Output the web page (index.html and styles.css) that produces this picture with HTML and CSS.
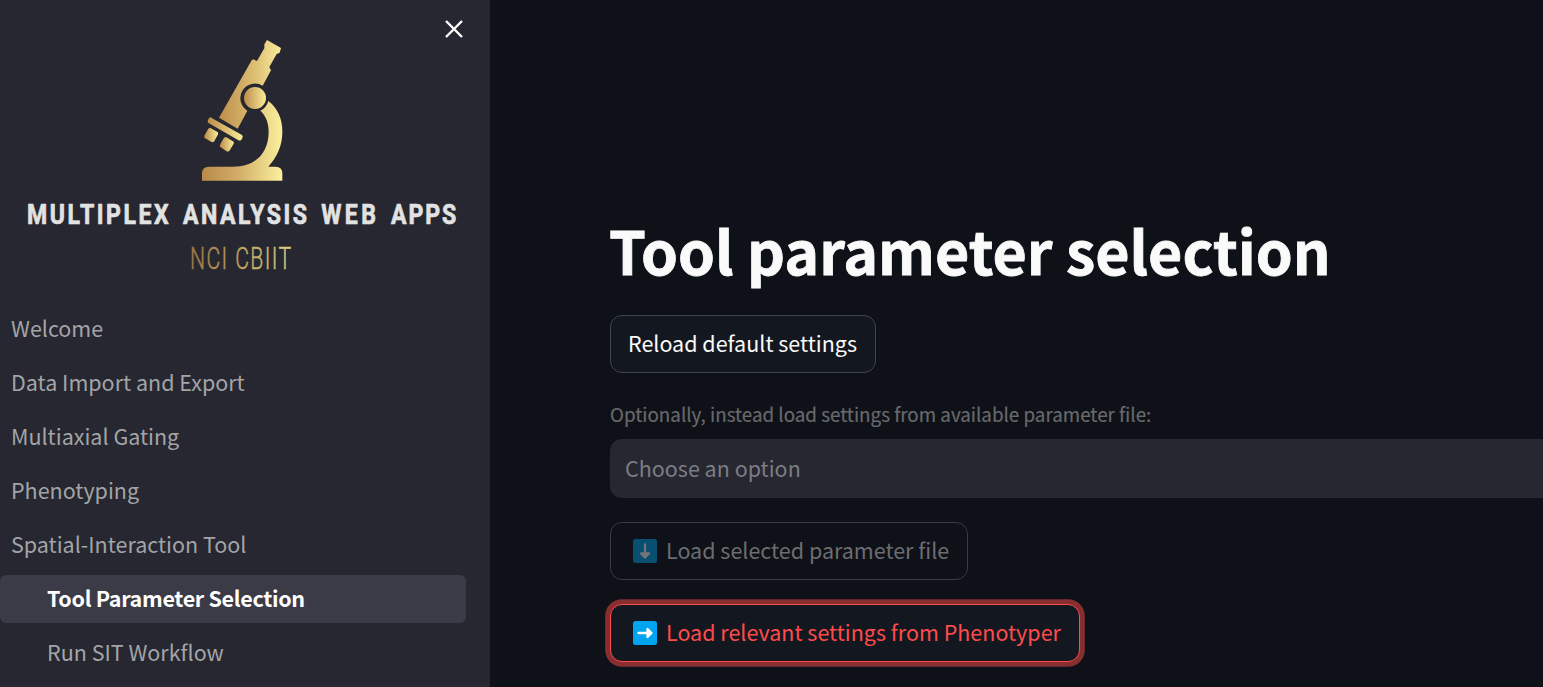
FILE: index.html
```
<!DOCTYPE html>
<html lang="en">
<head>
<meta charset="utf-8">
<title>Multiplex Analysis Web Apps</title>
<link rel="stylesheet" href="styles.css">
</head>
<body>
<div class="app">
  <aside class="sidebar">
    <button class="close" aria-label="Close sidebar"><svg width="20" height="20" viewBox="0 0 20 20"><path d="M2 2L18 18M18 2L2 18"/></svg></button>
    <header class="brand">
      <svg class="microscope" width="110" height="160" viewBox="0 0 330 480">
        <defs>
          <linearGradient id="gold" gradientUnits="userSpaceOnUse" x1="36" y1="0" x2="277" y2="0"><stop offset="0" stop-color="#b98a49"/><stop offset=".45" stop-color="#d2ae67"/><stop offset="1" stop-color="#fbf09d"/></linearGradient>
          <linearGradient id="tube" gradientUnits="userSpaceOnUse" x1="87" y1="0" x2="273" y2="0"><stop offset="0" stop-color="#be8f4c"/><stop offset=".5" stop-color="#d8b76e"/><stop offset="1" stop-color="#f9eb98"/></linearGradient>
          <linearGradient id="part"><stop offset="0" stop-color="#bd8c49"/><stop offset="1" stop-color="#f9ec98"/></linearGradient>
        </defs>
        <path fill="url(#tube)" d="M231 30L273 54L269 68L260 72L238 111L243 121L218 167A43 43 0 0 0 172 242L143 296L87 263L185 91L190 88L201 93L223 55L223 43Z"/>
        <circle fill="url(#part)" cx="195" cy="204" r="33"/>
        <path fill="url(#gold)" d="M235 213C264 234 278 270 277 309C276 350 260 382 235 410H257Q277 410 277 431V452H36V431Q36 410 57 410H130C192 410 235 374 236 306C236 280 228 257 211 242Q229 234 235 213Z"/>
        <path fill="url(#part)" d="M61 262L156 315Q160 318 157 325L153 331Q149 333 144 330L54 278Q52 275 54 271L57 264Z"/>
        <path fill="url(#part)" d="M60 293L84 307V313L72 335L66 337L43 323V317L55 296Z"/>
        <path fill="url(#part)" d="M108 321L131 335V341L118 363L112 365L90 350V344L102 323Z"/>
      </svg>
      <svg class="wordmark" width="470" height="90" viewBox="0 0 470 90">
        <text class="name" x="17" y="33.500" textLength="431" lengthAdjust="spacingAndGlyphs">MULTIPLEX ANALYSIS <tspan class="wide">WEB</tspan> <tspan class="tight">APPS</tspan></text>
        <defs><linearGradient id="org" gradientUnits="userSpaceOnUse" x1="180" y1="0" x2="282" y2="0"><stop offset="0" stop-color="#a27742"/><stop offset="1" stop-color="#ddcf82"/></linearGradient></defs>
        <text class="org" fill="url(#org)" stroke="url(#org)" x="180" y="79" textLength="102.500" lengthAdjust="spacingAndGlyphs">NCI CBIIT</text>
      </svg>
    </header>
    <nav class="nav">
      <a class="item"><span>Welcome</span></a>
      <a class="item"><span>Data Import and Export</span></a>
      <a class="item"><span>Multiaxial Gating</span></a>
      <a class="item"><span>Phenotyping</span></a>
      <a class="item"><span>Spatial-Interaction Tool</span></a>
      <a class="item sub active"><span>Tool Parameter Selection</span></a>
      <a class="item sub"><span>Run SIT Workflow</span></a>
    </nav>
  </aside>
  <main class="main">
    <h1>Tool parameter selection</h1>
    <button class="btn reload">Reload default settings</button>
    <label class="label">Optionally, instead load settings from available parameter file:</label>
    <div class="select">Choose an option</div>
    <button class="btn load disabled"><svg class="emoji" width="24" height="24" viewBox="0 0 24 24"><rect width="24" height="24" rx="2.5" fill="#00a4ef"/><path d="M12 5.500V15M8 14.500H16L12 18.500Z"/></svg>Load selected parameter file</button>
    <button class="btn load focused"><svg class="emoji" width="24" height="24" viewBox="0 0 24 24"><rect width="24" height="24" rx="2.5" fill="#00a4ef"/><path d="M5.500 12H15M14.500 8V16L18.500 12Z"/></svg>Load relevant settings from Phenotyper</button>
  </main>
</div>
</body>
</html>
```
FILE: styles.css
```
* { box-sizing: border-box; }
body { margin: 0; background: #0e1117; font-family: "Noto Sans CJK SC", "Noto Sans", sans-serif; overflow: hidden; }
.app { display: flex; width: 1543px; height: 687px; overflow: hidden; }
.sidebar { position: relative; flex: 0 0 490px; background: #262730; padding-top: 30px; }
.close { position: absolute; top: 19px; right: 26px; width: 20px; height: 20px; padding: 0; border: 0; background: none; }
.close svg { display: block; }
.close path { fill: none; stroke: #fff; stroke-width: 2.4; }
.brand { display: flex; flex-direction: column; height: 275px; }
.microscope { display: block; flex: none; margin-left: 190px; }
.wordmark { display: block; flex: none; margin-left: 10px; overflow: visible; }
.name { font: bold 27px "Roboto", sans-serif; fill: #e2e2e2; stroke: #e2e2e2; stroke-width: .7px; letter-spacing: 3px; word-spacing: 4px; }
.wide { letter-spacing: 4px; }
.tight { letter-spacing: 2.2px; }
.org { font: 300 31px "Roboto", sans-serif; letter-spacing: 2px; stroke-width: .4px; }
.nav { display: flex; flex-direction: column; gap: 6px; }
.item { display: flex; align-items: center; width: 466px; height: 48px; padding: 0 0 2px 11px; border-radius: 0 6px 6px 0; font-size: 21.5px; line-height: 36px; color: #a3a4a7; white-space: nowrap; }
.sub { padding-left: 47px; }
.active { background: #3b3b47; color: #fff; font-weight: 600; letter-spacing: -.31px; border-radius: 6px; }
.main { flex: 1; display: flex; flex-direction: column; align-items: flex-start; padding: 210px 0 0 120px; min-width: 0; color: #fafafa; }
h1 { margin: 0 0 0 -1px; height: 78px; font-size: 59.1px; line-height: 78px; font-weight: 700; white-space: nowrap; -webkit-text-stroke: .8px #fafafa; }
.btn { display: flex; align-items: center; flex: none; height: 58px; padding: 0 17px 2px; border: 1px solid #41444c; border-radius: 12px; background: #13171f; color: #fafafa; font-family: inherit; font-size: 21.5px; line-height: 38px; white-space: nowrap; }
.reload { width: 266px; margin-top: 27px; }
.label { margin-top: 25px; height: 31px; font-size: 18.8px; line-height: 31px; color: #68696c; white-space: nowrap; -webkit-text-stroke: .2px #68696c; }
.select { width: 1000px; height: 59px; margin-top: 10px; flex: none; padding-left: 15px; border-radius: 12px 0 0 12px; background: #262730; color: #7c7d83; font-size: 21.5px; line-height: 57px; }
.load { padding-left: 22px; }
.emoji { margin: 2px 9px 0 0; flex: none; }
.focused .emoji { margin-top: 1px; }
.emoji path { fill: #fff; stroke: #fff; stroke-width: 2.3; stroke-linecap: round; stroke-linejoin: round; }
.disabled { width: 358px; margin-top: 24px; background: #0e1117; color: #6c6d70; border-color: #393c42; }
.disabled .emoji { opacity: .42; }
.focused { width: 470px; margin-top: 24px; border-color: #ff4b4b; color: #ff4b4b; box-shadow: 0 0 0 4.800px rgba(255, 75, 75, .5); }
```
